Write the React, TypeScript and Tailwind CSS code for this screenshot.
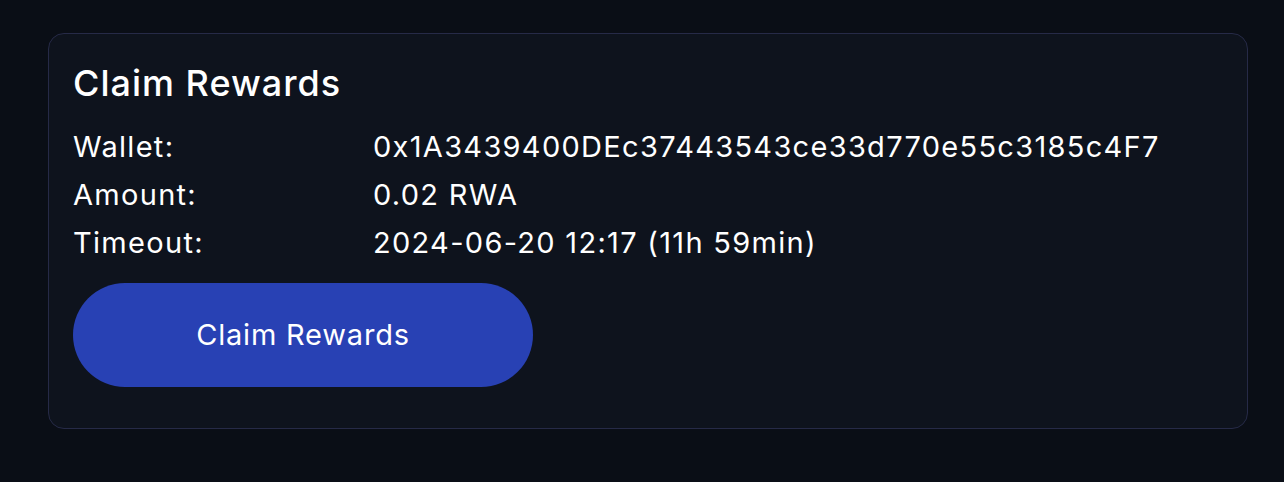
import React from "react";

export default function App() {
  const rows = [
    ["Wallet:", "0x1A3439400DEc37443543ce33d770e55c3185c4F7"],
    ["Amount:", "0.02 RWA"],
    ["Timeout:", "2024-06-20 12:17 (11h 59min)"],
  ];
  return (
    <div
      className="min-h-[482px] w-full bg-[#0a0e16] pt-[33px] px-[48px]"
      style={{ fontFamily: "Inter, 'Noto Sans', sans-serif" }}
    >
      <div className="w-[1200px] rounded-[16px] border border-[#262a47] bg-[#0e131d] px-[24px] pt-[27px] pb-[41px] text-white">
        <h2 className="text-[36px] leading-[44px] font-medium tracking-[1px]">Claim Rewards</h2>
        <div className="mt-[18px] grid grid-cols-[300px_1fr] text-[29px] leading-[48px] tracking-[1.3px]">
          {rows.map(([k, v]) => (
            <React.Fragment key={k}>
              <div>{k}</div>
              <div>{v}</div>
            </React.Fragment>
          ))}
        </div>
        <button className="mt-[16px] flex h-[104px] w-[460px] items-center justify-center rounded-full bg-[#2841b4] text-[29px] tracking-[0.8px] text-white">
          Claim Rewards
        </button>
      </div>
    </div>
  );
}
